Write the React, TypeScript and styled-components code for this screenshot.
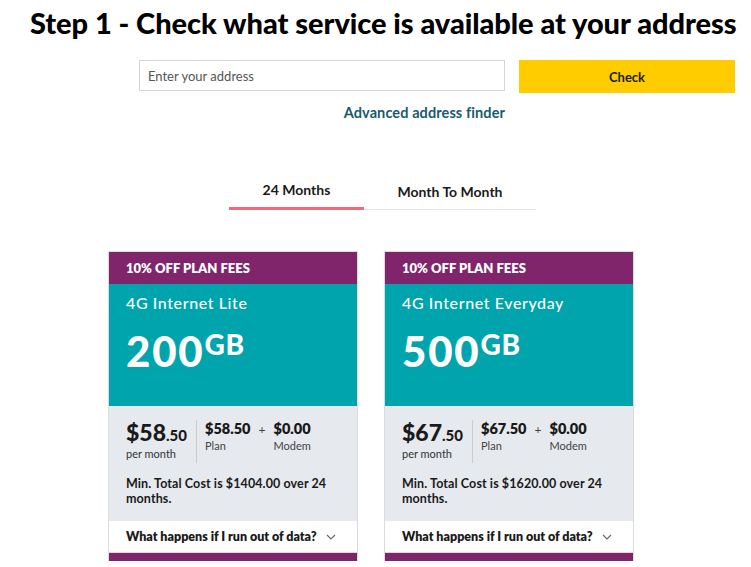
import React from 'react';
import styled, { createGlobalStyle } from 'styled-components';

const GlobalStyle = createGlobalStyle`
  html, body {
    margin: 0;
    padding: 0;
    background: #fff;
  }
  body {
    font-family: 'Lato', 'Noto Sans', sans-serif;
    color: #1a1a1a;
  }
  * {
    box-sizing: border-box;
  }
`;

const plans = [
  {
    name: '4G Internet Lite',
    data: '200',
    dollars: '$58',
    cents: '.50',
    plan: '$58.50',
    modem: '$0.00',
    total: '$1404.00',
  },
  {
    name: '4G Internet Everyday',
    data: '500',
    dollars: '$67',
    cents: '.50',
    plan: '$67.50',
    modem: '$0.00',
    total: '$1620.00',
  },
];

const App = () => {
  return (
    <Page>
      <GlobalStyle />
      <Title>Step 1 - Check what service is available at your address</Title>

      <SearchRow>
        <InputCol>
          <AddressInput placeholder="Enter your address" />
          <FinderLink href="#">Advanced address finder</FinderLink>
        </InputCol>
        <CheckButton>Check</CheckButton>
      </SearchRow>

      <Tabs>
        <Tab active>24 Months</Tab>
        <Tab>Month To Month</Tab>
      </Tabs>

      <Cards>
        {plans.map((p) => (
          <Card key={p.name}>
            <Promo>10% OFF PLAN FEES</Promo>
            <Hero>
              <PlanName>{p.name}</PlanName>
              <DataAmount>
                {p.data}
                <sup>GB</sup>
              </DataAmount>
            </Hero>
            <Pricing>
              <PriceRow>
                <MainPrice>
                  <strong>
                    {p.dollars}
                    <small>{p.cents}</small>
                  </strong>
                  <span>per month</span>
                </MainPrice>
                <Breakdown>
                  <Part>
                    <strong>{p.plan}</strong>
                    <span>Plan</span>
                  </Part>
                  <Plus>+</Plus>
                  <Part>
                    <strong>{p.modem}</strong>
                    <span>Modem</span>
                  </Part>
                </Breakdown>
              </PriceRow>
              <MinCost>{`Min. Total Cost is ${p.total} over 24 months.`}</MinCost>
            </Pricing>
            <Faq>
              <span>What happens if I run out of data?</span>
              <svg width="10" height="6" viewBox="0 0 10 6">
                <path
                  d="M1 1l4 4 4-4"
                  fill="none"
                  stroke="#666"
                  strokeWidth="1.1"
                />
              </svg>
            </Faq>
            <Footer />
          </Card>
        ))}
      </Cards>
    </Page>
  );
};

const Page = styled.div`
  width: 751px;
  height: 567px;
  overflow: hidden;
  padding-top: 5px;
`;

const Title = styled.h1`
  margin: 0 0 0 30px;
  font-size: 29px;
  font-weight: 900;
  line-height: 36px;
  color: #000;
  white-space: nowrap;
  letter-spacing: -0.05px;
`;

const SearchRow = styled.div`
  display: flex;
  align-items: flex-start;
  gap: 14px;
  margin: 19px 0 0 139px;
`;

const InputCol = styled.div`
  display: flex;
  flex-direction: column;
  width: 366px;
`;

const AddressInput = styled.input`
  height: 31px;
  border: 1px solid #d6d6d6;
  padding: 0 8px;
  font-family: 'Lato', sans-serif;
  font-size: 13px;
  color: #333;
  outline: none;
  &::placeholder {
    color: #555;
  }
`;

const FinderLink = styled.a`
  align-self: flex-end;
  margin-top: 13px;
  font-size: 14.5px;
  font-weight: 700;
  color: #195a6d;
  text-decoration: none;
  letter-spacing: 0.1px;
`;

const CheckButton = styled.button`
  width: 216px;
  height: 33px;
  border: none;
  background: #ffcc00;
  font-family: 'Lato', sans-serif;
  font-size: 13px;
  font-weight: 700;
  color: #1a1a1a;
`;

const Tabs = styled.div`
  display: flex;
  width: 307px;
  margin: 60px 0 0 229px;
  border-bottom: 1px solid #e4e4e4;
`;

const Tab = styled.div<{ active?: boolean }>`
  padding: 0 33px 0;
  height: 29px;
  display: flex;
  align-items: flex-start;
  justify-content: center;
  font-size: 14px;
  font-weight: 700;
  color: #1a1a1a;
  border-bottom: 3px solid ${(p) => (p.active ? '#f4697a' : 'transparent')};
  margin-bottom: -1px;
  ${(p) => (p.active ? 'width: 135px;' : 'flex: 1; padding-top: 2px;')}
`;

const Cards = styled.div`
  display: flex;
  gap: 26px;
  margin: 41px 0 0 108px;
`;

const Card = styled.div`
  width: 250px;
  border: 1px solid #dcdcdc;
  border-bottom: none;
  display: flex;
  flex-direction: column;
`;

const Promo = styled.div`
  height: 32px;
  background: #80256b;
  color: #fff;
  font-size: 13px;
  font-weight: 800;
  display: flex;
  align-items: center;
  padding-left: 17px;
`;

const Hero = styled.div`
  height: 122px;
  background: #00a4ad;
  color: #fff;
  padding: 9px 17px 0;
`;

const PlanName = styled.div`
  font-size: 16px;
  font-weight: 500;
  letter-spacing: 0.6px;
`;

const DataAmount = styled.div`
  margin-top: 17px;
  font-size: 42px;
  font-weight: 900;
  line-height: 44px;
  letter-spacing: 1.8px;
  sup {
    font-size: 28px;
    vertical-align: top;
    line-height: 30px;
    letter-spacing: 0.8px;
  }
`;

const Pricing = styled.div`
  height: 115px;
  background: #e6e9ed;
  padding: 14px 17px 0;
`;

const PriceRow = styled.div`
  display: flex;
  align-items: flex-start;
`;

const MainPrice = styled.div`
  display: flex;
  flex-direction: column;
  padding-right: 9px;
  border-right: 1px solid #c9ccd0;
  strong {
    font-size: 23px;
    font-weight: 900;
    line-height: 24px;
    small {
      font-size: 15px;
    }
  }
  span {
    font-size: 11px;
    color: #333;
    line-height: 14px;
    margin-bottom: 2px;
  }
`;

const Breakdown = styled.div`
  display: flex;
  align-items: flex-start;
  padding-left: 8px;
`;

const Part = styled.div`
  display: flex;
  flex-direction: column;
  strong {
    font-size: 14.5px;
    font-weight: 800;
    line-height: 18px;
  }
  span {
    font-size: 11px;
    color: #444;
    line-height: 16px;
  }
`;

const Plus = styled.div`
  font-size: 12px;
  color: #444;
  padding: 2px 8px 0;
`;

const MinCost = styled.div`
  margin-top: 13px;
  font-size: 12.5px;
  font-weight: 700;
  line-height: 15px;
  color: #1a1a1a;
  padding-right: 10px;
  letter-spacing: 0.1px;
`;

const Faq = styled.div`
  height: 32px;
  background: #fff;
  display: flex;
  align-items: center;
  justify-content: space-between;
  padding: 0 21px 0 17px;
  font-size: 12.5px;
  font-weight: 800;
  border-bottom: 1px solid #dadada;
  margin: 0;
`;

const Footer = styled.div`
  height: 8px;
  background: #80256b;
`;

export default App;
